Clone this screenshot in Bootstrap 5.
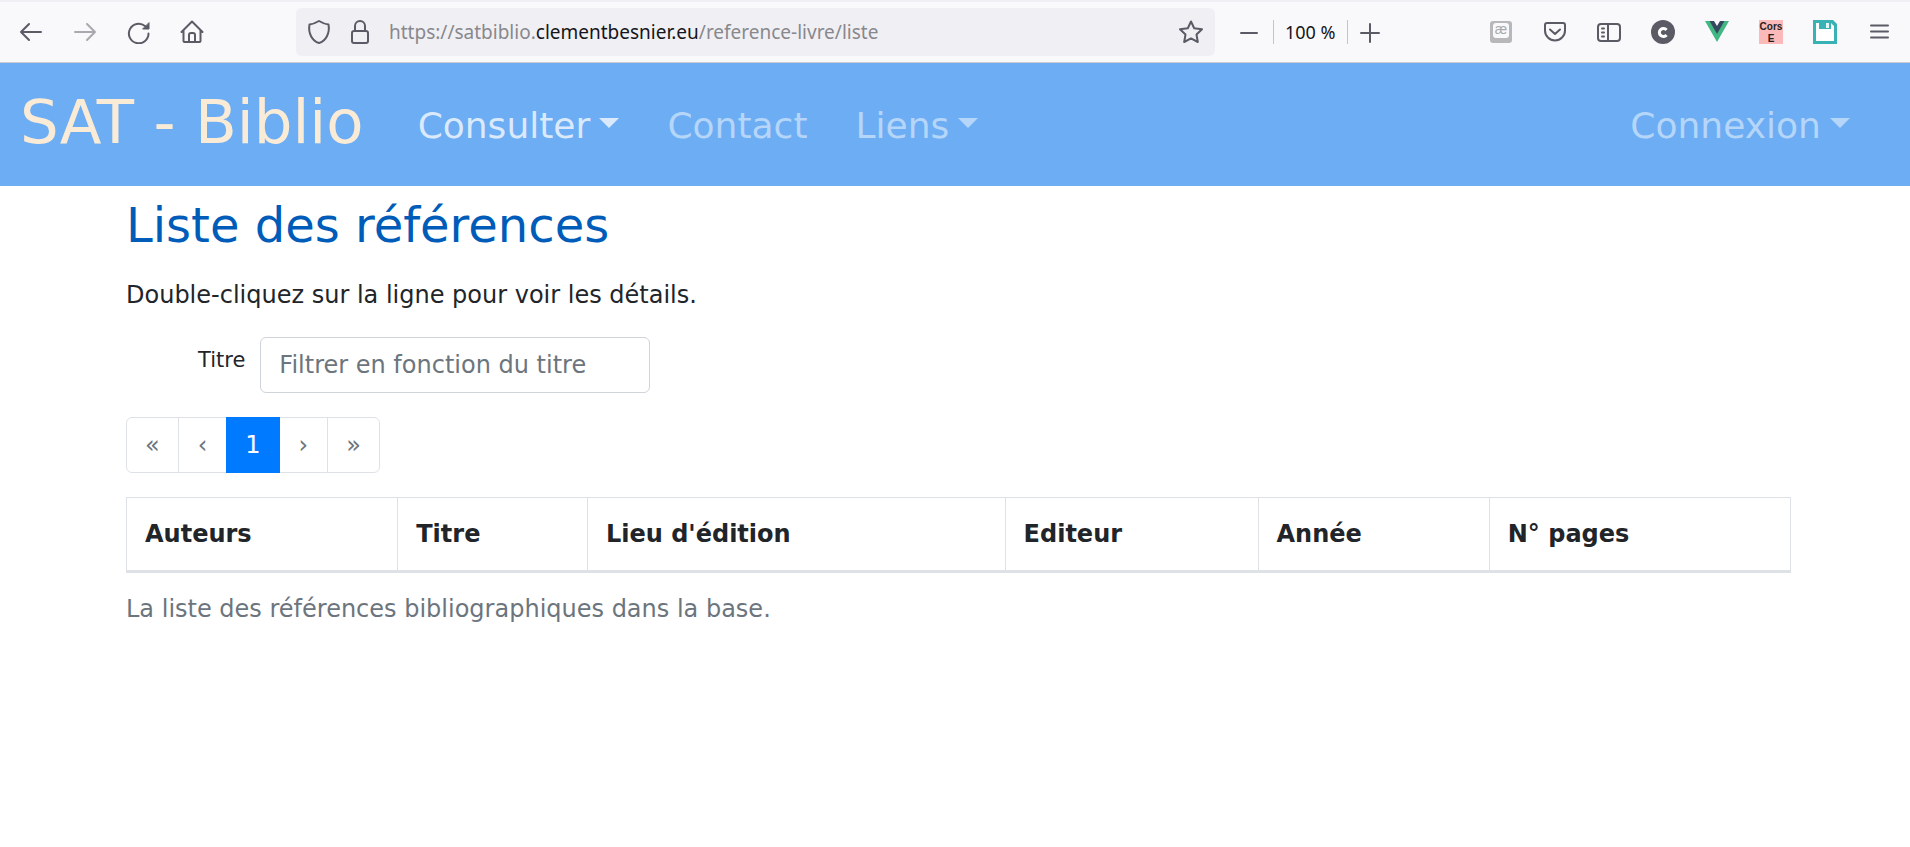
<!DOCTYPE html>
<html lang="fr">
<head>
<meta charset="utf-8">
<meta name="viewport" content="width=device-width, initial-scale=1">
<title>SAT - Biblio</title>
<link href="https://cdn.jsdelivr.net/npm/bootstrap@5.3.0/dist/css/bootstrap.min.css" rel="stylesheet">
<style>
  :root { --chrome: #f9f9fb; --ink: #5b5b66; }
  body { font-family: Verdana, "DejaVu Sans", sans-serif; font-size: 24px; color: #212529; }

  /* Browser toolbar */
  .browser-bar { height: 63px; background: var(--chrome); border-top: 2px solid #f0f0f4; border-bottom: 1px solid #ccccce; color: var(--ink); font-family: "Noto Sans", sans-serif; padding: 0 19px 0 18px; }
  .browser-bar svg { display: block; fill: none; stroke: currentColor; stroke-width: 2; stroke-linecap: round; stroke-linejoin: round; }
  .tool { border: 0; background: none; padding: 0; color: inherit; }
  .nav-tools { width: 278px; gap: 30px; }
  .address { width: 919px; height: 48px; background: #f0f0f4; border-radius: 6px; padding: 0 11px; gap: 19px; }
  .address a { font-size: 19px; color: #88888d; }
  .address a b { font-weight: 400; color: #15141a; }
  .zoom-tools { padding-left: 22px; gap: 12px; }
  .zoom-tools .level { border: solid #c4c4c8; border-width: 0 1px; height: 24px; line-height: 24px; font-size: 18px; color: #15141a; padding: 0 11px; }
  .ext-tools { gap: 30px; }
  .ext-tools text { stroke: none; font-family: "Liberation Sans", sans-serif; }

  /* Site navigation */
  .site-nav { background: #6cadf3; padding: 9px 20px 15px; min-height: 123px; --bs-navbar-color: rgba(255,255,255,.5); --bs-navbar-hover-color: rgba(255,255,255,.75); --bs-navbar-active-color: rgba(255,255,255,.75); }
  .site-nav .navbar-brand { font-size: 61px; line-height: 90px; color: #faebd7; padding: 0; margin-right: 30px; }
  .site-nav .navbar-nav { padding-top: 8px; }
  .site-nav .navbar-nav .nav-link { font-size: 36px; padding: 12px 24px; }

  /* Page content */
  .page { padding: 11px 119px 24px 126px; }
  .page h1 { font-size: 48px; line-height: 56px; margin-bottom: 24px; color: #005cb9; }
  .page p { line-height: 36px; margin-bottom: 24px; }
  .filter-row { gap: 15px; padding-left: 72px; margin-bottom: 24px; }
  .filter-row label { font-size: 21px; line-height: 32px; padding-top: 7px; }
  .filter-row .form-control { width: 390px; font-size: 24px; line-height: 36px; padding: 9px 18px; border-radius: 6px; border-color: #ced4da; color: #495057; }
  .filter-row .form-control::placeholder { color: #6c757d; }
  .page .pagination { --bs-pagination-font-size: 24px; --bs-pagination-padding-x: 18px; --bs-pagination-padding-y: 12px; --bs-pagination-border-radius: 6px; --bs-pagination-active-bg: #007bff; --bs-pagination-active-border-color: #007bff; --bs-pagination-disabled-bg: #fff; --bs-pagination-disabled-color: #6c757d; --bs-pagination-border-color: #dee2e6; margin-bottom: 24px; }
  .page .page-link { line-height: 30px; }
  .page .page-item:nth-child(even) .page-link { padding-left: 19px; padding-right: 19px; }
  .ref-table { table-layout: fixed; margin: 0; border-color: #dee2e6; }
  .ref-table th { padding: 18px; line-height: 36px; color: #212529; }
  .ref-table thead tr { border-bottom: 3px solid #dee2e6; }
  .ref-table caption { padding: 18px 0; line-height: 36px; color: #6c757d; }
</style>
</head>
<body>
<header class="browser-bar d-flex align-items-center">
  <div class="nav-tools d-flex align-items-center">
    <button class="tool" aria-label="Page précédente"><svg width="24" height="24" viewBox="0 0 24 24"><path d="M23 12H3M11 4l-8 8 8 8"/></svg></button>
    <button class="tool opacity-50" aria-label="Page suivante"><svg width="24" height="24" viewBox="0 0 24 24"><path d="M3 12h20M15 4l8 8-8 8"/></svg></button>
    <button class="tool" aria-label="Actualiser"><svg width="24" height="24" viewBox="0 0 24 24"><path d="M22.500 13.500a9.800 9.800 0 1 1-3.500-7.500"/><path d="M23 3v6h-6z" fill="currentColor" stroke-width="1"/></svg></button>
    <button class="tool" aria-label="Accueil"><svg width="24" height="24" viewBox="0 0 24 24"><path d="M1.500 12 12 1.500 22.500 12M3.500 10.500V21q0 1 1 1h15q1 0 1-1V10.500M9 22v-7q0-2 2-2h2q2 0 2 2v7"/></svg></button>
  </div>
  <div class="address d-flex align-items-center">
    <svg width="24" height="26" viewBox="0 0 24 26"><path d="M12 2q5 3 9.500 3.500C23 14 19 22 12 24 5 22 1 14 2.500 5.500Q7 5 12 2z"/></svg>
    <svg width="20" height="26" viewBox="0 0 20 26"><rect x="2" y="12" width="16" height="12" rx="2"/><path d="M5 12V7a5 5 0 0 1 10 0v5"/></svg>
    <a class="text-decoration-none flex-grow-1" href="#">https://satbiblio.<b>clementbesnier.eu</b>/reference-livre/liste</a>
    <button class="tool" aria-label="Marquer cette page"><svg width="26" height="24" viewBox="0 0 26 24"><path d="M13 1.500l3.200 6.700 7.800 1-5.500 5.300 1.300 7.500-6.800-3.600L6.200 22l1.300-7.500L2 9.200l7.800-1z"/></svg></button>
  </div>
  <div class="zoom-tools d-flex align-items-center">
    <button class="tool" aria-label="Zoom arrière"><svg width="24" height="24" viewBox="0 0 24 24"><path d="M4 13h16"/></svg></button>
    <span class="level">100 %</span>
    <button class="tool" aria-label="Zoom avant"><svg width="20" height="24" viewBox="0 0 20 24"><path d="M1 13h18M10 4v18"/></svg></button>
  </div>
  <div class="ext-tools d-flex align-items-center ms-auto">
    <button class="tool" aria-label="Caractères spéciaux"><svg width="24" height="24" viewBox="0 0 24 24"><rect x="1" y="1" width="22" height="22" rx="3" fill="#b8b8bb" stroke="none"/><rect x="4" y="3" width="16" height="15" rx="3" fill="#f9f9fb" stroke="none"/><text x="12" y="14" text-anchor="middle" font-size="14" fill="#aaaaad">æ</text></svg></button>
    <button class="tool" aria-label="Pocket"><svg width="24" height="24" viewBox="0 0 24 24"><path d="M4 3h16q2 0 2 2v5.500a10 10 0 0 1-20 0V5q0-2 2-2zM7 9.500l5 4.500 5-4.500"/></svg></button>
    <button class="tool" aria-label="Panneau latéral"><svg width="24" height="24" viewBox="0 0 24 24"><rect x="1" y="4" width="22" height="17" rx="3"/><path d="M11 4v17M5 8.500h2M5 12.500h2M5 16.500h2"/></svg></button>
    <button class="tool" aria-label="Extension C"><svg width="24" height="24" viewBox="0 0 24 24"><circle cx="12" cy="12" r="12" fill="#5b5b66" stroke="none"/><path d="M15.500 10a4 4 0 1 0 0 5" stroke="#fff" stroke-width="3" stroke-linecap="butt"/></svg></button>
    <button class="tool" aria-label="Vue"><svg width="24" height="24" viewBox="0 0 24 24"><g stroke="none"><path d="M0 1h5l7 12 7-12h5L12 22z" fill="#41b883"/><path d="M4.500 1H9l3 5 3-5h4.500L12 14z" fill="#35495e"/></g></svg></button>
    <button class="tool" aria-label="Cors E"><svg width="24" height="24" viewBox="0 0 24 24"><path d="M0 0h24v24H0z" fill="#fbb9b9" stroke="none"/><text x="12" y="10" text-anchor="middle" font-size="10" font-weight="700" fill="#222">Cors</text><text x="12" y="22" text-anchor="middle" font-size="10" font-weight="700" fill="#222">E</text></svg></button>
    <button class="tool" aria-label="Enregistrer"><svg width="24" height="24" viewBox="0 0 24 24"><g stroke="none"><path d="M0 0h20l4 4v20H0z" fill="#39b2b6"/><path d="M3 3h3v6h12V3l3 3v15H3z" fill="#fff"/><path d="M13 3h3v5h-3z" fill="#e4f5f5"/></g></svg></button>
    <button class="tool" aria-label="Menu"><svg width="24" height="24" viewBox="0 0 24 24"><path d="M4 5.500h17M4 11.500h17M4 17.500h17"/></svg></button>
  </div>
</header>

<nav class="site-nav navbar navbar-expand">
  <a class="navbar-brand" href="#">SAT - Biblio</a>
  <ul class="navbar-nav flex-grow-1">
    <li class="nav-item dropdown"><a class="nav-link active dropdown-toggle" href="#" role="button" data-bs-toggle="dropdown">Consulter</a></li>
    <li class="nav-item"><a class="nav-link" href="#">Contact</a></li>
    <li class="nav-item dropdown"><a class="nav-link dropdown-toggle" href="#" role="button" data-bs-toggle="dropdown">Liens</a></li>
    <li class="nav-item dropdown ms-auto me-3"><a class="nav-link dropdown-toggle" href="#" role="button" data-bs-toggle="dropdown">Connexion</a></li>
  </ul>
</nav>

<main class="page container-fluid">
  <h1 class="fw-normal">Liste des références</h1>
  <p>Double-cliquez sur la ligne pour voir les détails.</p>
  <form class="filter-row d-flex align-items-start">
    <label for="titre">Titre</label>
    <input class="form-control" id="titre" type="text" placeholder="Filtrer en fonction du titre">
  </form>
  <nav aria-label="Pagination">
    <ul class="pagination">
      <li class="page-item disabled"><a class="page-link" href="#">«</a></li>
      <li class="page-item disabled"><a class="page-link" href="#">‹</a></li>
      <li class="page-item active"><a class="page-link" href="#">1</a></li>
      <li class="page-item disabled"><a class="page-link" href="#">›</a></li>
      <li class="page-item disabled"><a class="page-link" href="#">»</a></li>
    </ul>
  </nav>
  <table class="ref-table table table-bordered">
    <caption>La liste des références bibliographiques dans la base.</caption>
    <colgroup><col style="width:16.3%"><col style="width:11.4%"><col style="width:25.1%"><col style="width:15.2%"><col style="width:13.9%"><col style="width:18.1%"></colgroup>
    <thead>
      <tr><th scope="col">Auteurs</th><th scope="col">Titre</th><th scope="col">Lieu d'édition</th><th scope="col">Editeur</th><th scope="col">Année</th><th scope="col">N° pages</th></tr>
    </thead>
  </table>
</main>
<script src="https://cdn.jsdelivr.net/npm/bootstrap@5.3.0/dist/js/bootstrap.bundle.min.js"></script>
</body>
</html>
